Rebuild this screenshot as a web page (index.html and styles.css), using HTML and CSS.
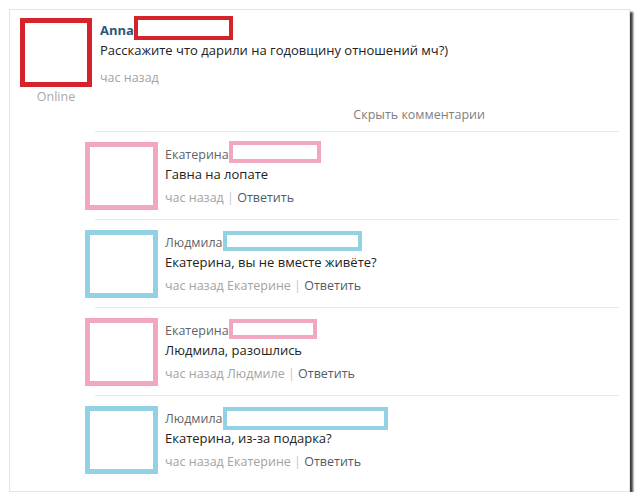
FILE: index.html
```html
<!DOCTYPE html>
<html lang="ru">
<head>
  <meta charset="UTF-8">
  <meta name="viewport" content="width=device-width, initial-scale=1.0">
  <title>Комментарии</title>
  <link rel="stylesheet" href="styles.css">
</head>
<body>
  <div class="card">
    <div class="post">
      <div class="post-side">
        <div class="avatar avatar-red"></div>
        <div class="online">Online</div>
      </div>
      <div class="post-body">
        <div class="name-row">
          <span class="author">Anna</span><span class="mask mask-red"></span>
        </div>
        <div class="text">Расскажите что дарили на годовщину отношений мч?)</div>
        <div class="meta post-meta">час назад</div>
      </div>
    </div>

    <div class="hide-row">Скрыть комментарии</div>

    <div class="comments">
      <div class="comment">
        <div class="avatar avatar-pink"></div>
        <div class="comment-body">
          <div class="name-row">
            <span class="commenter">Екатерина</span><span class="mask mask-pink mask-w1"></span>
          </div>
          <div class="text">Гавна на лопате</div>
          <div class="meta">час назад <span class="sep">|</span> <span class="reply">Ответить</span></div>
        </div>
      </div>

      <div class="comment">
        <div class="avatar avatar-blue"></div>
        <div class="comment-body">
          <div class="name-row">
            <span class="commenter">Людмила</span><span class="mask mask-blue mask-w2"></span>
          </div>
          <div class="text">Екатерина, вы не вместе живёте?</div>
          <div class="meta">час назад Екатерине <span class="sep">|</span> <span class="reply">Ответить</span></div>
        </div>
      </div>

      <div class="comment">
        <div class="avatar avatar-pink"></div>
        <div class="comment-body">
          <div class="name-row">
            <span class="commenter">Екатерина</span><span class="mask mask-pink mask-w3"></span>
          </div>
          <div class="text">Людмила, разошлись</div>
          <div class="meta">час назад Людмиле <span class="sep">|</span> <span class="reply">Ответить</span></div>
        </div>
      </div>

      <div class="comment">
        <div class="avatar avatar-blue"></div>
        <div class="comment-body">
          <div class="name-row">
            <span class="commenter">Людмила</span><span class="mask mask-blue mask-w4"></span>
          </div>
          <div class="text">Екатерина, из-за подарка?</div>
          <div class="meta">час назад Екатерине <span class="sep">|</span> <span class="reply">Ответить</span></div>
        </div>
      </div>
    </div>
  </div>
</body>
</html>
```

FILE: styles.css
```css
:root {
  --red: #d6232b;
  --pink: #f2a7c1;
  --blue: #93d1e5;
  --line: #e9e9e9;
}
body {
  margin: 0;
  padding: 9px 0 0 9px;
  background: #fff;
  font-family: "Open Sans", "DejaVu Sans", sans-serif;
  font-size: 13px;
  color: #222;
}
.card {
  width: 621px;
  height: 483px;
  box-sizing: border-box;
  background: #fff;
  border: 1px solid #e4e4e4;
  box-shadow: 3px 3px 2px rgba(0, 0, 0, 0.75);
  padding: 8px 10px 0 10px;
}
.post {
  display: flex;
  gap: 8px;
}
.post-side {
  display: flex;
  flex-direction: column;
  align-items: center;
  width: 72px;
}
.avatar {
  flex: none;
  box-sizing: border-box;
  background: #fff;
}
.avatar-red {
  width: 72px;
  height: 69px;
  border: 5px solid var(--red);
}
.avatar-pink {
  border: 5px solid var(--pink);
}
.avatar-blue {
  border: 5px solid var(--blue);
}
.online {
  color: #a8a8a8;
  font-size: 12.5px;
  line-height: 16px;
  margin-top: 2px;
}
.name-row {
  display: flex;
  align-items: center;
  height: 24px;
}
.author {
  color: #2b587a;
  font-weight: bold;
}
.commenter {
  color: #5f6468;
  font-size: 12.5px;
}
.mask {
  display: block;
  box-sizing: border-box;
  background: #fff;
}
.mask-red {
  width: 99px;
  height: 24px;
  border: 4px solid var(--red);
  margin-top: -4px;
}
.mask-pink {
  border: 4px solid var(--pink);
}
.mask-blue {
  border: 4px solid var(--blue);
}
.mask-w1 { width: 92px; height: 22px; margin-top: -4px; }
.mask-w2 { width: 139px; height: 20px; margin-top: -2px; }
.mask-w3 { width: 88px; height: 20px; margin-top: -2px; }
.mask-w4 { width: 165px; height: 23px; margin-top: 0; }
.text {
  line-height: 16px;
}
.meta {
  color: #a3a3a3;
  font-size: 12.5px;
  line-height: 18px;
  margin-top: 6px;
}
.post-meta {
  margin-top: 11px;
}
.sep {
  color: #c8c8c8;
}
.reply {
  color: #4f5c68;
}
.hide-row {
  color: #7f7f7f;
  font-size: 12.5px;
  text-align: right;
  padding-right: 134px;
  margin-top: 1px;
  line-height: 18px;
}
.comments {
  margin: 7px 0 0 75px;
}
.comment {
  display: flex;
  gap: 7px;
  border-top: 1px solid var(--line);
  padding: 10px 0 9px;
}
.comment .avatar {
  width: 73px;
  height: 68px;
  margin-left: -10px;
}
.comment-body {
  padding-top: 1px;
}
.comment .name-row {
  height: 22px;
}
.comment .text {
  line-height: 18px;
}
```
